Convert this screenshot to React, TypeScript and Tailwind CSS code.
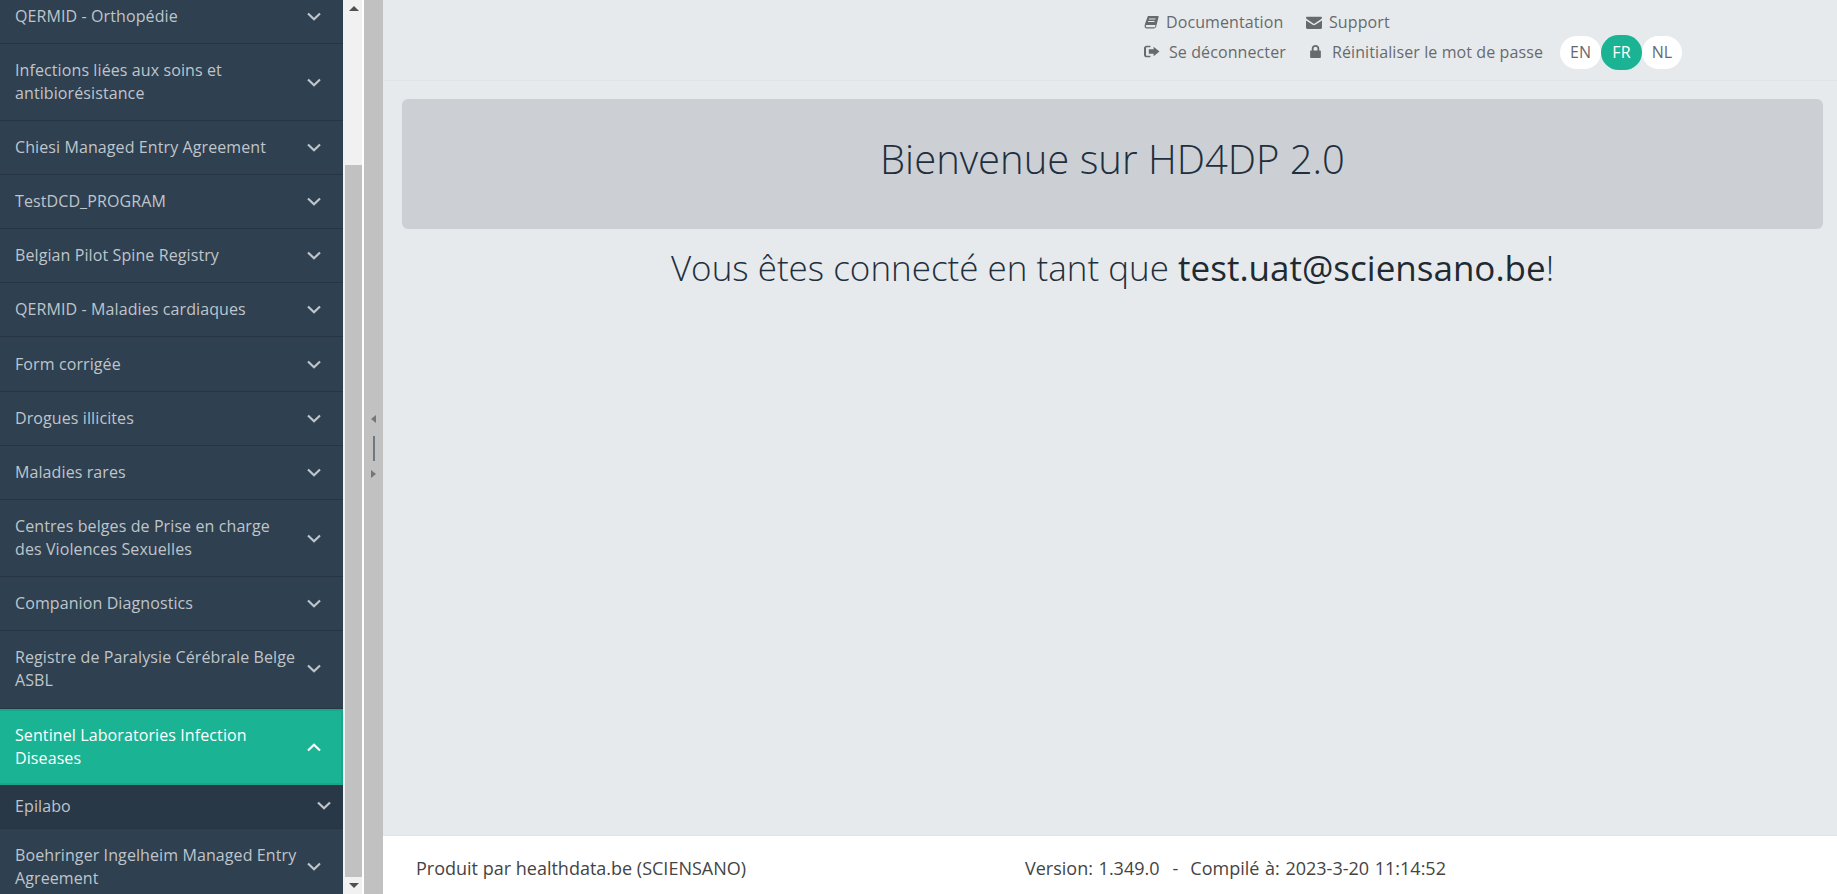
import React from 'react';

type NavItem = { label: string; height: string };

const items: NavItem[] = [
  { label: 'QERMID - Orthopédie', height: 'h-[54px]' },
  { label: 'Infections liées aux soins et antibiorésistance', height: 'h-[77px]' },
  { label: 'Chiesi Managed Entry Agreement', height: 'h-[54px]' },
  { label: 'TestDCD_PROGRAM', height: 'h-[54px]' },
  { label: 'Belgian Pilot Spine Registry', height: 'h-[54px]' },
  { label: 'QERMID - Maladies cardiaques', height: 'h-[54px]' },
  { label: 'Form corrigée', height: 'h-[55px]' },
  { label: 'Drogues illicites', height: 'h-[54px]' },
  { label: 'Maladies rares', height: 'h-[54px]' },
  { label: 'Centres belges de Prise en charge des Violences Sexuelles', height: 'h-[77px]' },
  { label: 'Companion Diagnostics', height: 'h-[54px]' },
  { label: 'Registre de Paralysie Cérébrale Belge ASBL', height: 'h-[78px] pb-[2px]' },
];

const Chevron = ({ up = false, className = '' }: { up?: boolean; className?: string }) => (
  <svg viewBox="0 0 14 9" className={`w-[14px] h-[9px] ${className}`} fill="none" stroke="currentColor" strokeWidth="2.2">
    <path d={up ? 'M1 7.5 7 1.7l6 5.8' : 'M1 1.5 7 7.3l6-5.8'} />
  </svg>
);

const NavRow = ({ item, first }: { item: NavItem; first?: boolean }) => (
  <div
    className={`flex items-center justify-between pl-[15px] pr-[22px] border-b border-[#263443] text-[#bfc5cb] leading-[23px] ${item.height} ${
      first ? '-mt-[10px]' : ''
    }`}
  >
    <span className="w-[284px]">{item.label}</span>
    <Chevron className="shrink-0" />
  </div>
);

const BookIcon = () => (
  <svg viewBox="0 0 14 14" className="w-[15px] h-[15px] fill-current">
    <path d="M3.6 1h9.200c.7 0 1 .5.8 1.100l-2.200 8.500c-.3 1-.9 1.900-2 1.900H2.600C1.200 12.500.3 11.400.6 10l.3-1.500zM4.800 3.300l-.3 1h6l.3-1zM4 5.500l-.3 1h6l.3-1zM2.700 9.400c-.6 0-1 .4-1 1s.4 1 1 1h7c.3 0 .5-.2.6-.5l.4-1.500z" fillRule="evenodd" />
  </svg>
);

const MailIcon = () => (
  <svg viewBox="0 0 15 14" className="w-[16px] h-[15px] fill-current">
    <path d="M1.200 1.500h12.600c.6 0 1.200.5 1.200 1.100 0 .5-.3.900-.7 1.200L8.200 7.900c-.4.300-1 .3-1.400 0L.7 3.800C.3 3.500 0 3.100 0 2.600 0 2 .6 1.500 1.200 1.500zM0 5.200l6.300 4c.7.4 1.700.4 2.400 0l6.300-4v6.600c0 .7-.5 1.200-1.200 1.200H1.200C.5 13 0 12.500 0 11.800z" />
  </svg>
);

const SignOutIcon = () => (
  <svg viewBox="0 0 15 14" className="w-[16px] h-[15px] fill-current">
    <path d="M2.500 1.500H6v1.600H2.800c-.5 0-.9.4-.9.900v6c0 .5.4.900.900.900H6v1.600H2.500C1.100 12.500 0 11.400 0 10V4c0-1.400 1.100-2.500 2.500-2.500z" />
    <path d="M9 2.500 14.500 7 9 11.500V9H4.500V5H9z" />
  </svg>
);

const LockIcon = () => (
  <svg viewBox="0 0 12 14" className="w-[13px] h-[15px] fill-current">
    <path d="M2.500 6V4.300C2.500 2.300 4 1 6 1s3.500 1.300 3.500 3.300V6h.6c.5 0 .900.4.900.900v5.200c0 .5-.4.900-.9.900H1.900c-.5 0-.9-.4-.9-.9V6.900c0-.5.4-.9.900-.9zm1.700 0h3.600V4.300C7.800 3.300 7 2.600 6 2.600s-1.800.7-1.800 1.700z" />
  </svg>
);

const Sidebar = () => (
  <aside className="w-[343px] h-full shrink-0 bg-[#2f4050] overflow-hidden text-base tracking-[0.1px]">
    {items.map((item, i) => (
      <NavRow key={i} item={item} first={i === 0} />
    ))}
    <div className="h-[76px] flex items-center justify-between pl-[15px] pr-[20px] bg-[#1ab394] border-2 border-l-0 border-[#18a689] text-white leading-[23px]">
      <span className="w-[284px]">Sentinel Laboratories Infection Diseases</span>
      <Chevron up className="shrink-0" />
    </div>
    <div className="h-[44px] pb-[2px] flex items-center justify-between pl-[15px] pr-[12px] bg-[#293846] border-b border-[#263443] text-[#bfc5cb]">
      <span>Epilabo</span>
      <Chevron />
    </div>
    <div className="h-[77px] pb-[2px] flex items-center justify-between pl-[15px] pr-[22px] text-[#bfc5cb] leading-[23px]">
      <span className="w-[284px]">Boehringer Ingelheim Managed Entry Agreement</span>
      <Chevron className="shrink-0" />
    </div>
  </aside>
);

const Scrollbar = () => (
  <div className="w-[21px] h-full shrink-0 bg-[#f1f1f1] border-r-[2px] border-white pl-[2px] flex flex-col items-center">
    <div className="h-[17px] flex items-center justify-center">
      <div className="border-x-[5px] border-x-transparent border-b-[5px] border-b-[#505050]" />
    </div>
    <div className="h-[148px] shrink-0" />
    <div className="flex-1 w-full bg-[#c1c1c1]" />
    <div className="h-[17px] flex items-center justify-center">
      <div className="border-x-[5px] border-x-transparent border-t-[5px] border-t-[#505050]" />
    </div>
  </div>
);

const Splitter = () => (
  <div className="w-[19px] h-full shrink-0 bg-[#c1c1c1] pb-[2px] flex flex-col items-center justify-center">
    <div className="border-y-[4px] border-y-transparent border-r-[5px] border-r-[#70777d]" />
    <div className="w-[2px] h-[25px] bg-[#70777d] mt-[13px] mb-[9px]" />
    <div className="border-y-[4px] border-y-transparent border-l-[5px] border-l-[#70777d]" />
  </div>
);

const Header = () => (
  <header className="h-[81px] shrink-0 border-b border-[#dfe3e7] pl-[761px] pt-[10px] text-[#676a6c] text-base tracking-[0.1px]">
    <div className="flex items-center h-[24px]">
      <span className="flex items-center gap-[7px] w-[162px]"><BookIcon />Documentation</span>
      <span className="flex items-center gap-[7px]"><MailIcon />Support</span>
    </div>
    <div className="flex items-center h-[35px] mt-[1px]">
      <span className="flex items-center gap-[9px] w-[165px] pb-[2px]"><SignOutIcon />Se déconnecter</span>
      <span className="flex items-center gap-[10px] w-[251px] pb-[2px]"><LockIcon />Réinitialiser le mot de passe</span>
      <div className="flex items-center">
        <span className="w-[41px] h-[33px] pb-[2px] rounded-full bg-white flex items-center justify-center">EN</span>
        <span className="w-[41px] h-[35px] pb-[2px] rounded-full bg-[#1ab394] text-white flex items-center justify-center">FR</span>
        <span className="w-[40px] h-[33px] pb-[2px] rounded-full bg-white flex items-center justify-center">NL</span>
      </div>
    </div>
  </header>
);

export default function App() {
  return (
    <div className="w-[1837px] h-[894px] flex overflow-hidden bg-[#e7eaec] font-['Open_Sans',sans-serif]">
      <Sidebar />
      <Scrollbar />
      <Splitter />
      <main className="flex-1 flex flex-col min-w-0">
        <Header />
        <div className="flex-1 pl-[19px] pr-[14px] pt-[18px] text-[#1f2f3e]">
          <div className="h-[130px] rounded-[6px] bg-[#ccd0d4] flex justify-center pt-[32px]">
            <h1 className="text-[40px] font-light leading-[56px]">Bienvenue sur HD4DP 2.0</h1>
          </div>
          <p className="mt-[14px] text-center text-[35px] font-light leading-[50px]">
            Vous êtes connecté en tant que <span className="font-normal text-[#1f2a33]">test.uat@sciensano.be</span>!
          </p>
        </div>
        <footer className="h-[59px] shrink-0 bg-white border-t border-[#dfe3e7] flex items-center pl-[33px] pt-[6px] text-[#444] text-[18px]">
          <span className="w-[609px]">Produit par healthdata.be (SCIENSANO)</span>
          <span className="[word-spacing:1px]">Version: 1.349.0</span>
          <span className="ml-[13px]">-</span>
          <span className="ml-[12px] [word-spacing:1px]">Compilé à: 2023-3-20 11:14:52</span>
        </footer>
      </main>
    </div>
  );
}
